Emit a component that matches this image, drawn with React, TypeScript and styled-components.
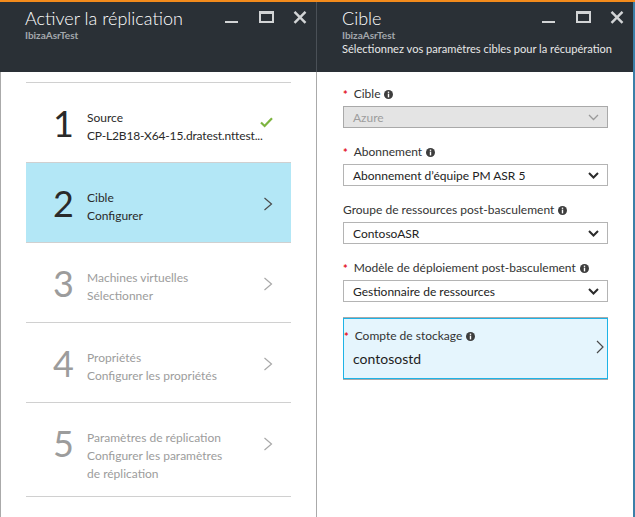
import styled, { createGlobalStyle } from 'styled-components';

const GlobalStyle = createGlobalStyle`
  html, body {
    margin: 0;
    padding: 0;
    background: #fff;
  }
  body {
    font-family: Lato, "Noto Sans", sans-serif;
  }
`;

const Page = styled.div`
  display: flex;
  width: 635px;
  height: 517px;
  box-sizing: border-box;
  border-top: 2px solid #f38b1c;
  overflow: hidden;
`;

const Blade = styled.section<{ $edge?: boolean }>`
  display: flex;
  flex-direction: column;
  width: ${({ $edge }) => ($edge ? '318px' : '317px')};
  box-sizing: border-box;
  border-right: ${({ $edge }) => ($edge ? '2px solid #3b7fa8' : 'none')};
`;

const Header = styled.header<{ $split?: boolean }>`
  height: 70px;
  box-sizing: border-box;
  padding: 4px 9px 0 25px;
  background: #2a3036;
  border-right: ${({ $split }) => ($split ? '1px solid #4a5057' : 'none')};
`;

const HeaderTop = styled.div`
  display: flex;
  justify-content: space-between;
  align-items: flex-start;
`;

const Title = styled.h1`
  margin: 1px 0 0;
  font-size: 18px;
  font-weight: 300;
  line-height: 22px;
  color: #fff;
`;

const Controls = styled.div`
  display: flex;
  gap: 19px;
  margin-top: 5px;
`;

const Subtitle = styled.div`
  margin-top: -1px;
  font-size: 10px;
  font-weight: 700;
  line-height: 14px;
  color: #a3a8ad;
`;

const Description = styled.div`
  margin-top: -1px;
  font-size: 11.1px;
  line-height: 16px;
  color: #e8e8e8;
  white-space: nowrap;
`;

const Body = styled.div<{ $split?: boolean }>`
  flex: 1;
  box-sizing: border-box;
  padding: ${({ $split }) => ($split ? '10px 25px 0' : '14px 25px 0 26px')};
  border-left: ${({ $split }) => ($split ? '1px solid #aaa' : 'none')};
  border-right: ${({ $split }) => ($split ? '1px solid #aaa' : 'none')};
`;

const StepList = styled.ol`
  list-style: none;
  margin: 0;
  padding: 0;
  border-top: 1px solid #d0d0d0;
`;

const StepRow = styled.li<{ $active?: boolean; $pending?: boolean }>`
  display: grid;
  grid-template-columns: 61px 1fr auto;
  align-items: start;
  min-height: 80px;
  box-sizing: border-box;
  padding: 25px 18px 13px 0;
  border-bottom: 1px solid #d0d0d0;
  background: ${({ $active }) => ($active ? '#b3e7f6' : 'transparent')};
  color: ${({ $pending }) => ($pending ? '#9c9c9c' : '#2a2a2a')};
`;

const StepNumber = styled.div`
  padding-left: 27px;
  font-size: 36px;
  font-weight: 400;
  line-height: 30px;
`;

const StepText = styled.div`
  min-width: 0;
  font-size: 12px;
  line-height: 18px;
`;

const StepTitle = styled.div`
  line-height: 19px;
`;

const StepSub = styled.div<{ $clip?: boolean }>`
  white-space: ${({ $clip }) => ($clip ? 'nowrap' : 'pre-line')};
  letter-spacing: ${({ $clip }) => ($clip ? '-0.15px' : 'normal')};
`;

const StepIcon = styled.div`
  margin-top: 9px;
  line-height: 0;
`;

const Field = styled.div`
  margin-bottom: 16px;
`;

const Label = styled.div`
  display: flex;
  align-items: center;
  height: 16px;
  margin-bottom: 4px;
  font-size: 12px;
  line-height: 16px;
  color: #333;
  white-space: nowrap;
`;

const Req = styled.span`
  align-self: flex-start;
  margin: 3px 6px 0 0;
  font-size: 11px;
  font-weight: 700;
  line-height: 11px;
  color: #e3101e;
`;

const Info = styled.svg`
  flex: none;
  margin-left: 4px;
`;

const Select = styled.div<{ $disabled?: boolean }>`
  display: flex;
  align-items: center;
  justify-content: space-between;
  height: 22px;
  box-sizing: border-box;
  padding: 0 8px 0 9px;
  border: 1px solid ${({ $disabled }) => ($disabled ? '#a9a9a9' : '#b4b4b4')};
  background: ${({ $disabled }) => ($disabled ? '#e4e4e4' : '#fff')};
  color: ${({ $disabled }) => ($disabled ? '#9d9d9d' : '#222')};
  font-size: 12px;
`;

const Picker = styled.div`
  display: flex;
  height: 61px;
  box-sizing: border-box;
  padding: 9px 3px 0 0;
  border: 1px solid #1eb3e6;
  box-shadow: 0 -1px 0 #a9a9a9, 0 1px 0 #a9a9a9;
  background: #e5f5fd;
`;

const PickerMain = styled.div`
  flex: 1;
`;

const PickerValue = styled.div`
  margin-top: 6px;
  padding-left: 9px;
  font-size: 14px;
  line-height: 18px;
  color: #1e1e1e;
`;

const PickerArrow = styled.svg`
  margin-top: 12px;
`;

const WindowControls = () => (
  <Controls>
    <svg width="15" height="13" viewBox="0 0 15 13">
      <rect x="0" y="10" width="13" height="2" fill="#d2d4d6" />
    </svg>
    <svg width="15" height="13" viewBox="0 0 15 13">
      <path d="M0 0H15V12H0Z M2 3V10H13V3Z" fill="#d2d4d6" fillRule="evenodd" />
    </svg>
    <svg width="14" height="13" viewBox="0 0 14 13">
      <path d="M1.5 0.8L12.5 11.8M12.5 0.8L1.5 11.8" stroke="#d2d4d6" strokeWidth="2.4" />
    </svg>
  </Controls>
);

const InfoIcon = () => (
  <Info width="9" height="9" viewBox="0 0 9 9">
    <circle cx="4.5" cy="4.5" r="4.5" fill="#3d3d3d" />
    <rect x="3.8" y="1.6" width="1.4" height="1.3" fill="#fff" />
    <rect x="3.8" y="3.6" width="1.4" height="3.8" fill="#fff" />
  </Info>
);

const Chevron = ({ color }: { color: string }) => (
  <svg width="10" height="14" viewBox="0 0 10 14">
    <polyline points="1.5,1 8.5,7 1.5,13" fill="none" stroke={color} strokeWidth="1.2" />
  </svg>
);

const Check = () => (
  <svg width="13" height="11" viewBox="0 0 13 11">
    <polyline points="1,5.5 4.6,9 12,1.2" fill="none" stroke="#7db43f" strokeWidth="2.2" />
  </svg>
);

const DropArrow = ({ disabled }: { disabled?: boolean }) => (
  <svg width="11" height="7" viewBox="0 0 11 7">
    <polyline
      points="1,1 5.5,5.5 10,1"
      fill="none"
      stroke={disabled ? '#9a9a9a' : '#2b2b2b'}
      strokeWidth={disabled ? 1.3 : 2}
    />
  </svg>
);

type Step = {
  n: number;
  title: string;
  sub: string;
  done?: boolean;
  active?: boolean;
  pending?: boolean;
};

const steps: Step[] = [
  { n: 1, title: 'Source', sub: 'CP-L2B18-X64-15.dratest.nttest...', done: true },
  { n: 2, title: 'Cible', sub: 'Configurer', active: true },
  { n: 3, title: 'Machines virtuelles', sub: 'Sélectionner', pending: true },
  { n: 4, title: 'Propriétés', sub: 'Configurer les propriétés', pending: true },
  {
    n: 5,
    title: 'Paramètres de réplication',
    sub: 'Configurer les paramètres\nde réplication',
    pending: true,
  },
];

type SelectField = {
  label: string;
  value: string;
  required?: boolean;
  disabled?: boolean;
};

const fields: SelectField[] = [
  { label: 'Cible', value: 'Azure', required: true, disabled: true },
  { label: 'Abonnement', value: 'Abonnement d’équipe PM ASR 5', required: true },
  { label: 'Groupe de ressources post-basculement', value: 'ContosoASR' },
  { label: 'Modèle de déploiement post-basculement', value: 'Gestionnaire de ressources', required: true },
];

const App = () => {
  return (
    <>
      <GlobalStyle />
      <Page>
        <Blade>
          <Header $split>
            <HeaderTop>
              <Title>Activer la réplication</Title>
              <WindowControls />
            </HeaderTop>
            <Subtitle>IbizaAsrTest</Subtitle>
          </Header>
          <Body $split>
            <StepList>
              {steps.map((s) => (
                <StepRow key={s.n} $active={s.active} $pending={s.pending}>
                  <StepNumber>{s.n}</StepNumber>
                  <StepText>
                    <StepTitle>{s.title}</StepTitle>
                    <StepSub $clip={s.done}>{s.sub}</StepSub>
                  </StepText>
                  <StepIcon>
                    {s.done ? <Check /> : <Chevron color={s.pending ? '#a8a8a8' : '#4a4a4a'} />}
                  </StepIcon>
                </StepRow>
              ))}
            </StepList>
          </Body>
        </Blade>

        <Blade $edge>
          <Header>
            <HeaderTop>
              <Title>Cible</Title>
              <WindowControls />
            </HeaderTop>
            <Subtitle>IbizaAsrTest</Subtitle>
            <Description>Sélectionnez vos paramètres cibles pour la récupération</Description>
          </Header>
          <Body>
            {fields.map((f) => (
              <Field key={f.label}>
                <Label>
                  {f.required && <Req>*</Req>}
                  {f.label}
                  <InfoIcon />
                </Label>
                <Select $disabled={f.disabled}>
                  {f.value}
                  <DropArrow disabled={f.disabled} />
                </Select>
              </Field>
            ))}
            <Picker>
              <PickerMain>
                <Label>
                  <Req>*</Req>
                  Compte de stockage
                  <InfoIcon />
                </Label>
                <PickerValue>contosostd</PickerValue>
              </PickerMain>
              <PickerArrow width="8" height="14" viewBox="0 0 8 14">
                <polyline points="1,1 7,7 1,13" fill="none" stroke="#4a4a4a" strokeWidth="1.2" />
              </PickerArrow>
            </Picker>
          </Body>
        </Blade>
      </Page>
    </>
  );
};

export default App;
